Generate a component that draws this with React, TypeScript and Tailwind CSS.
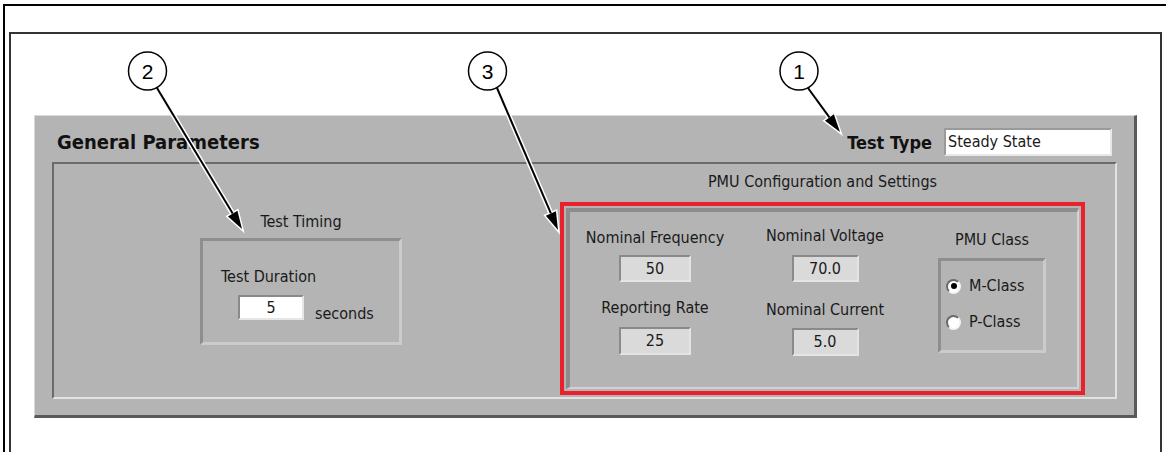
import React from "react";

const font = { fontFamily: '"DejaVu Sans Condensed", "DejaVu Sans", sans-serif' };

type Pt = [number, number];

function Callout({ label, c, start, tip }: { label: string; c: Pt; start: Pt; tip: Pt }) {
  const dx = tip[0] - start[0];
  const dy = tip[1] - start[1];
  const len = Math.sqrt(dx * dx + dy * dy);
  const ux = dx / len;
  const uy = dy / len;
  const bx = tip[0] - 18 * ux;
  const by = tip[1] - 18 * uy;
  const head = `${tip[0]},${tip[1]} ${bx - 5.5 * uy},${by + 5.5 * ux} ${bx + 5.5 * uy},${by - 5.5 * ux}`;
  return (
    <g>
      <line x1={start[0]} y1={start[1]} x2={bx} y2={by} stroke="white" strokeWidth={5} />
      <polygon points={head} fill="white" stroke="white" strokeWidth={3} />
      <line x1={start[0]} y1={start[1]} x2={bx} y2={by} stroke="black" strokeWidth={2} />
      <polygon points={head} fill="black" />
      <circle cx={c[0]} cy={c[1]} r={19} fill="white" stroke="black" strokeWidth={1.5} />
      <text
        x={c[0]}
        y={c[1] + 7.5}
        textAnchor="middle"
        fontSize={21}
        fontFamily='"Liberation Sans", Arial, sans-serif'
        fill="black"
      >
        {label}
      </text>
    </g>
  );
}

function Field({ value, className = "" }: { value: string; className?: string }) {
  return (
    <div
      className={`flex items-center justify-center border-2 border-t-[#8a8a8a] border-l-[#8a8a8a] border-b-[#e4e4e4] border-r-[#e4e4e4] bg-[#dadada] text-[16px] text-[#1a1a1a] ${className}`}
    >
      {value}
    </div>
  );
}

function Radio({ checked, label }: { checked: boolean; label: string }) {
  return (
    <div className="flex items-center gap-[8px] h-4">
      <div className="w-[15px] h-[15px] rounded-full bg-white border-2 border-t-[#6a6a6a] border-l-[#6a6a6a] border-b-[#f4f4f4] border-r-[#f4f4f4] flex items-center justify-center">
        {checked && <div className="w-[6px] h-[6px] rounded-full bg-black" />}
      </div>
      <span className="text-[16px] leading-4 text-[#1a1a1a]">{label}</span>
    </div>
  );
}

export default function App() {
  return (
    <div className="relative w-[1166px] h-[452px] bg-white overflow-hidden" style={font}>
      {/* outer frame */}
      <div className="ml-[3px] mt-[4px] h-[448px] border-t-2 border-l-2 border-black">
        {/* inner frame */}
        <div className="ml-[4px] mt-[26px] w-[1153px] h-[420px] border-t-2 border-x-2 border-[#333]">
          {/* LabVIEW panel */}
          <div className="ml-[23px] mt-[81px] w-[1103px] h-[303px] bg-[#b4b4b4] border-t border-l border-t-[#d8d8d8] border-l-[#d8d8d8] border-r-[3px] border-b-[3px] border-r-[#5a5a5a] border-b-[#5a5a5a]">
            {/* header */}
            <div className="h-[46px] pt-[6px] px-[22px] flex items-center justify-between">
              <h1 className="text-[20px] font-bold text-[#111]">General Parameters</h1>
              <div className="flex items-center gap-[12px]">
                <span className="text-[18px] font-bold text-[#111]">Test Type</span>
                <div className="w-[168px] h-[28px] bg-white border-2 border-t-[#9a9a9a] border-l-[#9a9a9a] border-b-[#e8e8e8] border-r-[#e8e8e8] flex items-center pl-[2px] text-[16px] text-[#1a1a1a]">
                  Steady State
                </div>
              </div>
            </div>

            {/* recessed area */}
            <div className="mx-[17px] h-[237px] border-2 border-t-[#6b6b6b] border-l-[#6b6b6b] border-b-[#e2e2e2] border-r-[#e2e2e2] flex">
              {/* Test Timing */}
              <div className="ml-[146px] mt-[50px] flex flex-col items-center">
                <div className="h-4 leading-4 text-[16px] text-[#1a1a1a] mb-[8px]">Test Timing</div>
                <div className="w-[202px] h-[107px] border-[3px] border-t-[#8e8e8e] border-l-[#8e8e8e] border-b-[#cbcbcb] border-r-[#cbcbcb] pl-[18px] pt-[28px]">
                  <div className="h-4 leading-4 text-[16px] text-[#1a1a1a]">Test Duration</div>
                  <div className="flex items-end gap-[11px] mt-[10px] ml-[17px]">
                    <div className="w-[66px] h-[25px] bg-white border-2 border-t-[#8a8a8a] border-l-[#8a8a8a] border-b-[#e6e6e6] border-r-[#e6e6e6] flex items-center justify-center text-[16px] text-[#1a1a1a]">
                      5
                    </div>
                    <span className="text-[16px] leading-4 text-[#1a1a1a] -mb-[2px]">seconds</span>
                  </div>
                </div>
              </div>

              {/* PMU Configuration */}
              <div className="ml-[158px] mt-[10px] flex flex-col items-center">
                <div className="h-4 leading-4 text-[16px] text-[#1a1a1a] mb-[12px]">PMU Configuration and Settings</div>
                <div className="w-[525px] h-[193px] border-4 border-[#e8212b] p-[2px]">
                  <div className="h-full border-t-[4px] border-l-[4px] border-b-2 border-r-2 border-t-[#8c8c8c] border-l-[#8c8c8c] border-b-[#d2d2d2] border-r-[#d2d2d2] flex">
                    <div className="w-[170px] pt-[18px] flex flex-col items-center">
                      <div className="h-4 leading-4 text-[16px] text-[#1a1a1a]">Nominal Frequency</div>
                      <Field value="50" className="w-[72px] h-[27px] mt-[9px]" />
                      <div className="h-4 leading-4 text-[16px] text-[#1a1a1a] mt-[18px]">Reporting Rate</div>
                      <Field value="25" className="w-[72px] h-[28px] mt-[11px]" />
                    </div>
                    <div className="w-[170px] pt-[16px] flex flex-col items-center">
                      <div className="h-4 leading-4 text-[16px] text-[#1a1a1a]">Nominal Voltage</div>
                      <Field value="70.0" className="w-[67px] h-[27px] mt-[11px]" />
                      <div className="h-4 leading-4 text-[16px] text-[#1a1a1a] mt-[20px]">Nominal Current</div>
                      <Field value="5.0" className="w-[67px] h-[28px] mt-[10px]" />
                    </div>
                    <div className="w-[164px] pt-[20px] flex flex-col items-center">
                      <div className="h-4 leading-4 text-[16px] text-[#1a1a1a]">PMU Class</div>
                      <div className="w-[108px] h-[95px] mt-[10px] border-[3px] border-t-[#8e8e8e] border-l-[#8e8e8e] border-b-[#cbcbcb] border-r-[#cbcbcb] pl-[5px] pt-[17px] flex flex-col gap-[20px]">
                        <Radio checked label="M-Class" />
                        <Radio checked={false} label="P-Class" />
                      </div>
                    </div>
                  </div>
                </div>
              </div>
            </div>
          </div>
        </div>
      </div>

      {/* callouts over the panel */}
      <svg className="absolute inset-0 pointer-events-none" width={1166} height={452}>
        <Callout label="2" c={[147.5, 71]} start={[157, 88]} tip={[242, 229]} />
        <Callout label="3" c={[487.5, 71]} start={[497, 88]} tip={[558, 230]} />
        <Callout label="1" c={[799, 71]} start={[808, 88]} tip={[840, 132]} />
      </svg>
    </div>
  );
}
